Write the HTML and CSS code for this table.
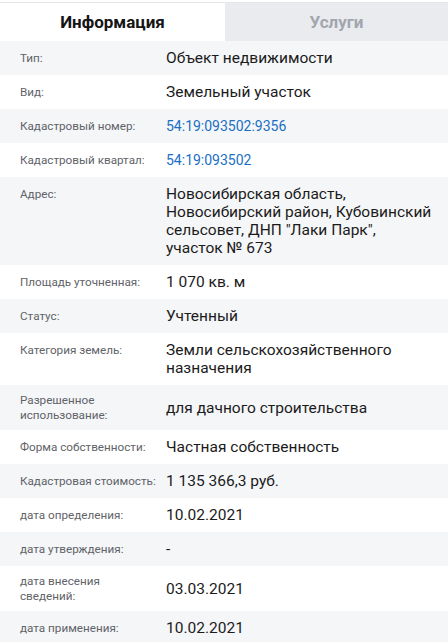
FILE: index.html
```html
<!DOCTYPE html>
<html lang="ru">
<head>
<meta charset="utf-8">
<link rel="stylesheet" href="styles.css">
</head>
<body>
<div class="page">
  <div class="tabs">
    <div class="tab active">Информация</div>
    <div class="tab">Услуги</div>
  </div>
  <div class="rows">
    <div class="row"><div class="label">Тип:</div><div class="value">Объект недвижимости</div></div>
    <div class="row"><div class="label">Вид:</div><div class="value">Земельный участок</div></div>
    <div class="row"><div class="label">Кадастровый номер:</div><div class="value link">54:19:093502:9356</div></div>
    <div class="row"><div class="label">Кадастровый квартал:</div><div class="value link">54:19:093502</div></div>
    <div class="row top"><div class="label">Адрес:</div><div class="value">Новосибирская область, Новосибирский район, Кубовинский сельсовет, ДНП "Лаки Парк", участок № 673</div></div>
    <div class="row"><div class="label">Площадь уточненная:</div><div class="value">1 070 кв. м</div></div>
    <div class="row"><div class="label">Статус:</div><div class="value">Учтенный</div></div>
    <div class="row top"><div class="label">Категория земель:</div><div class="value">Земли сельскохозяйственного назначения</div></div>
    <div class="row"><div class="label">Разрешенное использование:</div><div class="value">для дачного строительства</div></div>
    <div class="row"><div class="label">Форма собственности:</div><div class="value">Частная собственность</div></div>
    <div class="row"><div class="label">Кадастровая стоимость:</div><div class="value">1 135 366,3 руб.</div></div>
    <div class="row"><div class="label">дата определения:</div><div class="value">10.02.2021</div></div>
    <div class="row"><div class="label">дата утверждения:</div><div class="value">-</div></div>
    <div class="row"><div class="label">дата внесения сведений:</div><div class="value">03.03.2021</div></div>
    <div class="row"><div class="label">дата применения:</div><div class="value">10.02.2021</div></div>
  </div>
</div>
</body>
</html>
```
FILE: styles.css
```css
html, body {
  margin: 0;
  padding: 0;
  background: #ffffff;
}
body {
  font-family: Roboto, "Liberation Sans", Arial, sans-serif;
  color: #1b1b1b;
}
.page {
  padding-top: 2px;
  width: 448px;
}
.tabs {
  display: flex;
  border-top: 1px solid #e4e6ea;
  height: 38px;
}
.tab {
  flex: 0 0 225px;
  display: flex;
  align-items: center;
  justify-content: center;
  font-size: 17px;
  font-weight: 700;
  color: #a2a6ad;
  background: #e9ebef;
}
.tab + .tab {
  flex: 1 1 auto;
}
.tab.active {
  background: #ffffff;
  color: #151515;
}
.row {
  display: flex;
  align-items: center;
  padding: 8px 14px 8px 20px;
  background: #ffffff;
}
.row:nth-child(odd) {
  background: #f5f6f8;
}
.row.top {
  align-items: flex-start;
}
.label {
  flex: 0 0 146px;
  font-size: 11.7px;
  line-height: 14.5px;
  color: #5f6368;
  padding-right: 9px;
  box-sizing: border-box;
}
.row.top .label {
  padding-top: 2px;
}
.value {
  flex: 1 1 auto;
  font-size: 15.5px;
  line-height: 18px;
  color: #1b1b1b;
}
.value.link {
  font-size: 14px;
  color: #1a6fc4;
}
```
